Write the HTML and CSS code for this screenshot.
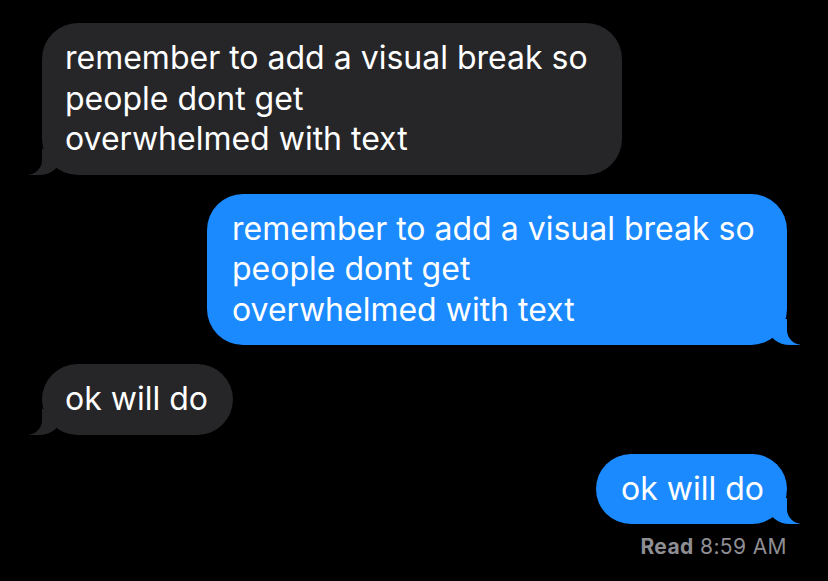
FILE: index.html
```html
<!DOCTYPE html>
<html lang="en">
<head>
  <meta charset="UTF-8">
  <meta name="viewport" content="width=device-width, initial-scale=1">
  <title>Messages</title>
  <link rel="stylesheet" href="styles.css">
</head>
<body>
  <div class="thread">
    <p class="stamp"><b>Today</b> 8:59 AM</p>

    <div class="msg msg-in msg-long">remember to add a visual break so<br>people dont get<br>overwhelmed with text</div>
    <div class="msg msg-out msg-long">remember to add a visual break so<br>people dont get<br>overwhelmed with text</div>
    <div class="msg msg-in">ok will do</div>
    <div class="msg msg-out">ok will do</div>

    <p class="receipt"><b>Read</b> 8:59 AM</p>
  </div>
</body>
</html>
```

FILE: styles.css
```css
*{
  margin: 0;
  padding: 0;
  box-sizing: border-box;
}

html, body{
  height: 100%;
  background: #000;
  overflow: hidden;
}

body{
  font-family: Inter, "Liberation Sans", sans-serif;
  color: #fff;
}

.thread{
  display: flex;
  flex-direction: column;
  gap: 19px;
  padding: 0 41px 0 42px;
}

.stamp{
  margin-top: -22px;
  margin-bottom: 6px;
  text-align: center;
  font-size: 20px;
  line-height: 20px;
  color: #8e8e93;
}

.msg{
  position: relative;
  padding: 15px 25px 15px 23px;
  border-radius: 36px;
  font-size: 32px;
  line-height: 40.5px;
}

/* wrapped bubbles fill the max bubble width */
.msg-long{
  width: 580px;
}

.msg-out{
  padding: 15px 23px 15px 25px;
}

.msg::before,
.msg::after{
  content: "";
  position: absolute;
  bottom: 0;
  height: 26px;
}

.msg-in{
  align-self: flex-start;
  background: #262629;
}

.msg-in::before{
  left: -13px;
  width: 32px;
  background: #262629;
  border-bottom-right-radius: 22px 18px;
}

.msg-in::after{
  left: -32px;
  width: 32px;
  background: #000;
  border-bottom-right-radius: 15px;
}

.msg-out{
  align-self: flex-end;
  background: #1b8aff;
}

.msg-out::before{
  right: -13px;
  width: 32px;
  background: #1b8aff;
  border-bottom-left-radius: 22px 18px;
}

.msg-out::after{
  right: -32px;
  width: 32px;
  background: #000;
  border-bottom-left-radius: 15px;
}

.receipt{
  align-self: flex-end;
  margin-top: -8px;
  font-size: 21px;
  line-height: 24px;
  letter-spacing: 0.4px;
  color: #8e8e93;
}
```
